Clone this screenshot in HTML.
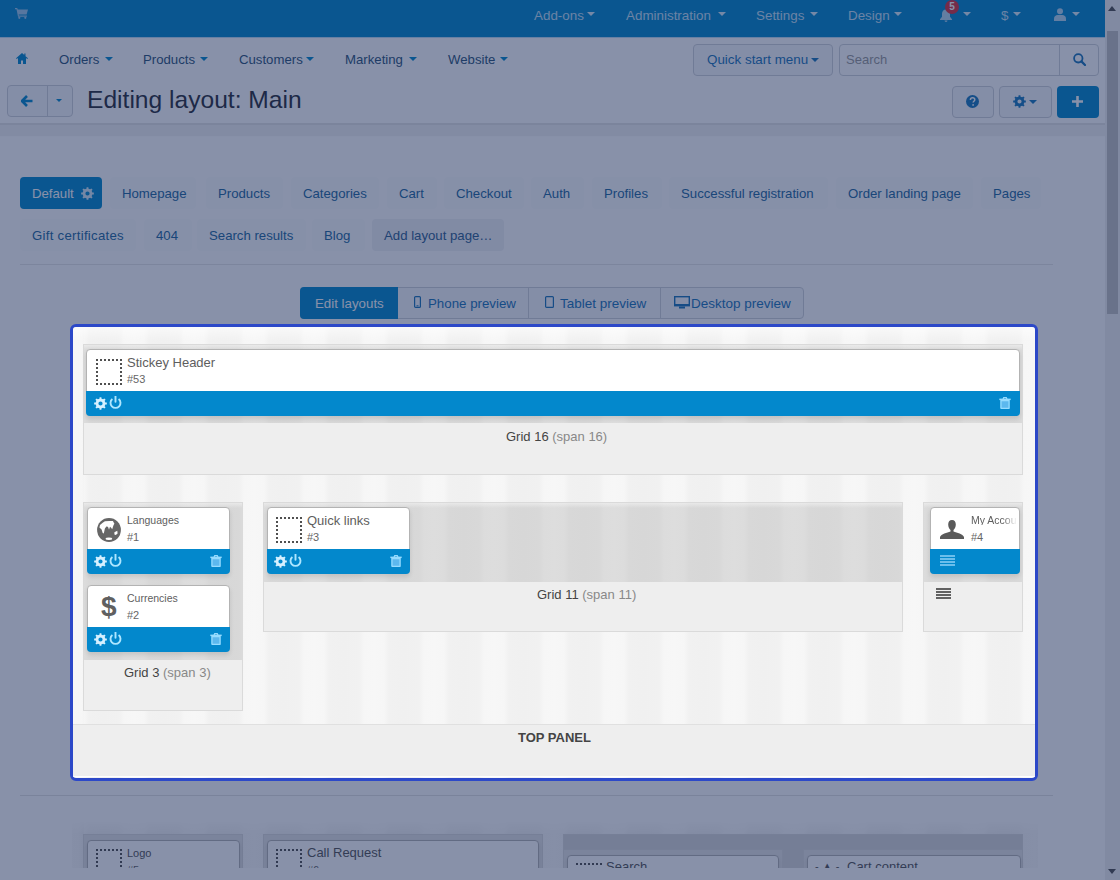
<!DOCTYPE html>
<html><head><meta charset="utf-8">
<style>
*{box-sizing:border-box}
html,body{margin:0;padding:0}
body{width:1120px;height:880px;overflow:hidden;position:relative;background:#fff;font-family:"Liberation Sans",sans-serif}
.a{position:absolute;white-space:nowrap}
svg{position:absolute;display:block}
#topbar{position:absolute;left:0;top:0;width:1105px;height:38px;background:#0388cc;border-bottom:1px solid #bcdcf4}
.tt{position:absolute;top:9px;font-size:13.4px;line-height:13px;color:#c4e2f6}
.caret{position:absolute;width:0;height:0;border-left:4px solid transparent;border-right:4px solid transparent;border-top:4px solid currentColor}
.nav2{position:absolute;top:53px;font-size:13.2px;line-height:13px;color:#2c5478}
.btn{position:absolute;border:1px solid #cfd3d8;border-radius:4px;background:#f7f8fa}
.tab{position:absolute;height:32px;border-radius:4px;font-size:13.2px;line-height:34px;color:#22689e;padding-left:12px}
#overlay{position:absolute;left:0;top:0;width:1120px;height:880px;background:rgba(18,36,84,0.5);z-index:10}
#hl{position:absolute;left:70px;top:324px;width:968px;height:457px;border:3px solid #2c48c8;border-radius:6px;z-index:20;overflow:hidden;
background:repeating-linear-gradient(90deg,#f6f6f6 0,#f1f1f1 5px,#f0f0f0 20px,#f1f1f1 35px,#f6f6f6 40px,#f7f7f7 50px,#f6f6f6 60px);background-position:11px 0;background-color:#f3f3f3}
.grid{position:absolute;background:#eeeeee;border:1px solid #dadada}
.gdark{position:absolute;left:0;top:0;right:0;background:linear-gradient(rgba(240,240,240,0.7),rgba(240,240,240,0) 5px),repeating-linear-gradient(90deg,#dcdcdc 0,#d8d8d8 5px,#d7d7d7 20px,#d8d8d8 35px,#dcdcdc 40px,#dddddd 50px,#dcdcdc 60px);background-position:0 0,0 0}
.blk{position:absolute;background:#fff;border:1px solid #b3b3b3;border-radius:4px;box-shadow:0 3px 4px rgba(0,0,0,0.10)}
.bar{position:absolute;left:-1px;right:-1px;bottom:-1px;height:25px;background:#0388cc;border-radius:0 0 4px 4px}
.bt{position:absolute;color:#5e5e5e;white-space:nowrap}
.glbl{position:absolute;font-size:13px;line-height:13px;color:#444;white-space:nowrap}
.glbl span{color:#888}
</style></head><body>

<!-- TOP BAR -->
<div id="topbar">
  <svg style="left:15px;top:7px" width="13" height="12" viewBox="0 0 13 12"><path d="M0 1h2.2l.6 1.5H13l-1.4 5H3.6l.3 1h8v1.2H3L1.5 2.2H0z" fill="#9cc8ea"/><circle cx="4.3" cy="10.8" r="1.1" fill="#9cc8ea"/><circle cx="10.3" cy="10.8" r="1.1" fill="#9cc8ea"/></svg>
  <div class="tt" style="left:534px">Add-ons</div><div class="caret" style="left:587px;top:12px;color:#d8ecf8"></div>
  <div class="tt" style="left:626px">Administration</div><div class="caret" style="left:718px;top:12px;color:#d8ecf8"></div>
  <div class="tt" style="left:756px">Settings</div><div class="caret" style="left:810px;top:12px;color:#d8ecf8"></div>
  <div class="tt" style="left:848px">Design</div><div class="caret" style="left:894px;top:12px;color:#d8ecf8"></div>
  <svg style="left:939px;top:9px" width="14" height="13" viewBox="0 0 14 13"><path d="M7 0.5c-2.6 0-4 2-4 4.3v3L1 10.3v.7h12v-.7L11 7.8v-3C11 2.5 9.6.5 7 .5zM5.5 11.6a1.5 1.4 0 0 0 3 0z" fill="#b5d8f0"/></svg>
  <div style="position:absolute;left:945px;top:0px;width:14px;height:14px;border-radius:7px;background:#d9323e;color:#fff;font-size:10px;line-height:14px;text-align:center;font-weight:bold">5</div>
  <div class="caret" style="left:963px;top:12px;color:#d8ecf8"></div>
  <div class="tt" style="left:1001px">$</div><div class="caret" style="left:1013px;top:12px;color:#d8ecf8"></div>
  <svg style="left:1054px;top:8px" width="12" height="13" viewBox="0 0 12 13"><circle cx="6" cy="3.3" r="3" fill="#b5d8f0"/><path d="M0 13v-2.5C0 8.2 2 7 3.5 7h5C10 7 12 8.2 12 10.5V13z" fill="#b5d8f0"/></svg>
  <div class="caret" style="left:1072px;top:12px;color:#d8ecf8"></div>
</div>

<!-- SECOND NAV -->
<svg style="left:16px;top:53px" width="12" height="11" viewBox="0 0 12 11"><path d="M6 0L0 5.3l.8.8L2 5v6h3V7.5h2V11h3V5l1.2 1.1.8-.8L9.5 3.2V.6H8.3v1.5z" fill="#0388cc"/></svg>
<div class="nav2" style="left:59px">Orders</div><div class="caret" style="left:105px;top:57px;color:#0388cc"></div>
<div class="nav2" style="left:143px">Products</div><div class="caret" style="left:200px;top:57px;color:#0388cc"></div>
<div class="nav2" style="left:239px">Customers</div><div class="caret" style="left:306px;top:57px;color:#0388cc"></div>
<div class="nav2" style="left:345px">Marketing</div><div class="caret" style="left:409px;top:57px;color:#0388cc"></div>
<div class="nav2" style="left:448px">Website</div><div class="caret" style="left:500px;top:57px;color:#0388cc"></div>

<div class="btn" style="left:693px;top:44px;width:140px;height:32px"></div>
<div class="a" style="left:707px;top:53px;font-size:13.4px;line-height:13px;color:#1a74b8">Quick start menu</div><div class="caret" style="left:811px;top:58px;color:#1a74b8"></div>
<div class="btn" style="left:839px;top:44px;width:260px;height:32px;background:#fff;border-radius:4px"></div>
<div style="position:absolute;left:1059px;top:45px;width:1px;height:30px;background:#cfd3d8"></div>
<div class="a" style="left:846px;top:53px;font-size:13px;line-height:13px;color:#999">Search</div>
<svg style="left:1073px;top:53px" width="13" height="13" viewBox="0 0 13 13"><circle cx="5.3" cy="5.3" r="4.2" fill="none" stroke="#1a74b8" stroke-width="1.8"/><path d="M8.4 8.4l3.6 3.6" stroke="#1a74b8" stroke-width="2.2" stroke-linecap="round"/></svg>

<!-- TITLE ROW -->
<div class="btn" style="left:7px;top:85px;width:66px;height:32px"></div>
<div style="position:absolute;left:47px;top:86px;width:1px;height:30px;background:#cfd3d8"></div>
<svg style="left:21px;top:95px" width="12" height="12" viewBox="0 0 12 12"><path d="M6 1L1 6l5 5M1.5 6H11.5" fill="none" stroke="#0388cc" stroke-width="2.6" stroke-linejoin="round"/></svg>
<div class="caret" style="left:56px;top:99px;color:#0388cc;border-left-width:3.5px;border-right-width:3.5px;border-top-width:3.5px"></div>
<div class="a" style="left:87px;top:86px;font-size:24.6px;line-height:28px;color:#2b2f3a">Editing layout: Main</div>

<div class="btn" style="left:952px;top:86px;width:42px;height:32px"></div>
<svg style="left:966px;top:95px" width="13" height="13" viewBox="0 0 13 13"><circle cx="6.5" cy="6.5" r="6.5" fill="#1878bc"/><path d="M4.4 4.9c0-1.3 1-2.1 2.2-2.1 1.3 0 2.2.8 2.2 1.9 0 1.5-1.7 1.6-1.7 2.9" fill="none" stroke="#fff" stroke-width="1.5"/><circle cx="7.1" cy="9.9" r=".9" fill="#fff"/></svg>
<div class="btn" style="left:999px;top:86px;width:53px;height:32px"></div>
<svg style="left:1013px;top:95px" width="13" height="13" viewBox="0 0 13 13"><path fill-rule="evenodd" fill="#1878bc" d="M11.29 5.45 L12.84 5.62 L12.84 7.38 L11.29 7.55 L10.63 9.14 L11.60 10.36 L10.36 11.60 L9.14 10.63 L7.55 11.29 L7.38 12.84 L5.62 12.84 L5.45 11.29 L3.86 10.63 L2.64 11.60 L1.40 10.36 L2.37 9.14 L1.71 7.55 L0.16 7.38 L0.16 5.62 L1.71 5.45 L2.37 3.86 L1.40 2.64 L2.64 1.40 L3.86 2.37 L5.45 1.71 L5.62 0.16 L7.38 0.16 L7.55 1.71 L9.14 2.37 L10.36 1.40 L11.60 2.64 L10.63 3.86Z M8.60 6.50 A2.1 2.1 0 1 0 4.40 6.50 A2.1 2.1 0 1 0 8.60 6.50Z"/></svg>
<div class="caret" style="left:1029px;top:100px;color:#1878bc"></div>
<div style="position:absolute;left:1057px;top:86px;width:42px;height:32px;border-radius:4px;background:#0388cc"></div>
<svg style="left:1071px;top:95px" width="13" height="13" viewBox="0 0 13 13"><path d="M6.5 1v11M1 6.5h11" stroke="#fff" stroke-width="2.6"/></svg>

<div style="position:absolute;left:0;top:123px;width:1105px;height:14px;background:#f3f3f3;border-top:2px solid #e4e4e4;border-bottom:1px solid #fcfcfc"></div>

<!-- TABS -->
<div class="tab" style="left:20px;top:177px;width:82px;background:#0388cc;color:#fff">Default</div>
<svg style="left:81px;top:187px" width="13" height="13" viewBox="0 0 13 13"><path fill-rule="evenodd" fill="#d6ebf7" d="M11.29 5.45 L12.84 5.62 L12.84 7.38 L11.29 7.55 L10.63 9.14 L11.60 10.36 L10.36 11.60 L9.14 10.63 L7.55 11.29 L7.38 12.84 L5.62 12.84 L5.45 11.29 L3.86 10.63 L2.64 11.60 L1.40 10.36 L2.37 9.14 L1.71 7.55 L0.16 7.38 L0.16 5.62 L1.71 5.45 L2.37 3.86 L1.40 2.64 L2.64 1.40 L3.86 2.37 L5.45 1.71 L5.62 0.16 L7.38 0.16 L7.55 1.71 L9.14 2.37 L10.36 1.40 L11.60 2.64 L10.63 3.86Z M8.60 6.50 A2.1 2.1 0 1 0 4.40 6.50 A2.1 2.1 0 1 0 8.60 6.50Z"/></svg>
<div class="tab" style="left:110px;top:177px;width:86px;background:#fbfcfd">Homepage</div>
<div class="tab" style="left:206px;top:177px;width:77px;background:#fbfcfd">Products</div>
<div class="tab" style="left:291px;top:177px;width:88px;background:#fbfcfd">Categories</div>
<div class="tab" style="left:387px;top:177px;width:50px;background:#fbfcfd">Cart</div>
<div class="tab" style="left:444px;top:177px;width:80px;background:#fbfcfd">Checkout</div>
<div class="tab" style="left:531px;top:177px;width:53px;background:#fbfcfd">Auth</div>
<div class="tab" style="left:592px;top:177px;width:70px;background:#fbfcfd">Profiles</div>
<div class="tab" style="left:669px;top:177px;width:159px;background:#fbfcfd">Successful registration</div>
<div class="tab" style="left:836px;top:177px;width:137px;background:#fbfcfd">Order landing page</div>
<div class="tab" style="left:981px;top:177px;width:60px;background:#fbfcfd">Pages</div>
<div class="tab" style="left:20px;top:219px;width:116px;background:#fbfcfd;letter-spacing:0.28px">Gift certificates</div>
<div class="tab" style="left:144px;top:219px;width:48px;background:#fbfcfd">404</div>
<div class="tab" style="left:197px;top:219px;width:109px;background:#fbfcfd">Search results</div>
<div class="tab" style="left:312px;top:219px;width:53px;background:#fbfcfd">Blog</div>
<div class="tab" style="left:372px;top:219px;width:132px;background:#f1f2f5;color:#2e6090">Add layout page…</div>

<div style="position:absolute;left:20px;top:264px;width:1033px;height:1px;background:#e6e6e6"></div>

<!-- BUTTON GROUP -->
<div style="position:absolute;left:300px;top:287px;width:504px;height:32px;border:1px solid #cfd3d8;border-radius:4px;background:#f7f8fa"></div>
<div style="position:absolute;left:300px;top:287px;width:98px;height:32px;background:#0388cc;border-radius:4px 0 0 4px"></div>
<div style="position:absolute;left:528px;top:288px;width:1px;height:30px;background:#cfd3d8"></div>
<div style="position:absolute;left:660px;top:288px;width:1px;height:30px;background:#cfd3d8"></div>
<div class="a" style="left:315px;top:297px;font-size:13.3px;line-height:13px;color:#fff">Edit layouts</div>
<div class="a" style="left:428px;top:297px;font-size:13.3px;line-height:13px;color:#1a74b8">Phone preview</div>
<div class="a" style="left:560px;top:297px;font-size:13.5px;line-height:13px;color:#1a74b8">Tablet preview</div>
<div class="a" style="left:691px;top:297px;font-size:13.5px;line-height:13px;color:#1a74b8">Desktop preview</div>
<svg style="left:414px;top:296px" width="7" height="12" viewBox="0 0 7 12"><rect x=".6" y=".6" width="5.8" height="10.8" rx="1" fill="none" stroke="#1a74b8" stroke-width="1.2"/><rect x="2.5" y="9.3" width="2" height="1" fill="#1a74b8"/></svg>
<svg style="left:545px;top:296px" width="9" height="12" viewBox="0 0 9 12"><rect x=".6" y=".6" width="7.8" height="10.8" rx="1" fill="none" stroke="#1a74b8" stroke-width="1.2"/></svg>
<svg style="left:674px;top:296px" width="16" height="13" viewBox="0 0 16 13"><rect x=".7" y=".7" width="14.6" height="9" fill="none" stroke="#1a74b8" stroke-width="1.4"/><rect x="1" y="8" width="14" height="2" fill="#1a74b8"/><rect x="5" y="10.5" width="6" height="2" fill="#1a74b8"/></svg>

<!-- BELOW (dimmed) -->
<div style="position:absolute;left:20px;top:795px;width:1033px;height:1px;background:#e2e2e2"></div>
<div style="position:absolute;left:72px;top:820px;width:966px;height:60px;background:repeating-linear-gradient(90deg,#f9f9f9 0,#f4f4f4 5px,#f3f3f3 20px,#f4f4f4 35px,#f9f9f9 40px,#fafafa 50px,#f9f9f9 60px);background-position:12px 0;-webkit-mask-image:linear-gradient(transparent,#000 14px)"></div>
<div class="grid" style="left:83px;top:834px;width:160px;height:60px;background:#e4e4e4"></div>
<div class="blk" style="left:87px;top:840px;width:153px;height:60px"></div>
<div class="a" style="left:127px;top:848px;font-size:11px;line-height:11px;color:#555">Logo</div>
<div class="a" style="left:127px;top:865px;font-size:11px;line-height:11px;color:#666">#5</div>
<div style="position:absolute;left:96px;top:849px;width:26px;height:26px;border:2px dotted #505050"></div>
<div class="grid" style="left:263px;top:834px;width:280px;height:60px;background:#e4e4e4"></div>
<div class="blk" style="left:267px;top:840px;width:272px;height:60px"></div>
<div class="a" style="left:307px;top:846px;font-size:13px;line-height:13px;color:#555">Call Request</div>
<div class="a" style="left:307px;top:865px;font-size:11px;line-height:11px;color:#666">#6</div>
<div style="position:absolute;left:276px;top:849px;width:26px;height:26px;border:2px dotted #505050"></div>
<div class="grid" style="left:563px;top:834px;width:460px;height:60px;background:#d9d9d9"></div>
<div class="grid" style="left:563px;top:849px;width:220px;height:60px;background:#e4e4e4"></div>
<div class="grid" style="left:803px;top:849px;width:220px;height:60px;background:#e4e4e4"></div>
<div class="blk" style="left:567px;top:855px;width:212px;height:60px"></div>
<div style="position:absolute;left:576px;top:863px;width:26px;height:2px;border-top:2px dotted #505050"></div>
<div class="a" style="left:606px;top:860px;font-size:13px;line-height:13px;color:#555">Search</div>
<div class="blk" style="left:807px;top:855px;width:214px;height:60px"></div>
<div class="a" style="left:815px;top:861px;font-size:11px;line-height:11px;color:#555">- &#9650; -</div>
<div class="a" style="left:847px;top:860px;font-size:13px;line-height:13px;color:#555">Cart content</div>
<div style="position:absolute;left:0;top:868px;width:1105px;height:12px;background:#fff"></div>

<!-- SCROLLBAR -->
<div style="position:absolute;left:1105px;top:0;width:15px;height:880px;background:#f1f1f1"></div>
<div style="position:absolute;left:1107px;top:31px;width:11px;height:283px;background:#c1c1c1"></div>
<div class="caret" style="left:1108px;top:6px;border-top:0;border-bottom:5px solid #505050;border-left-width:4.5px;border-right-width:4.5px"></div>
<div class="caret" style="left:1108px;top:869px;border-top:5px solid #505050;border-left-width:4.5px;border-right-width:4.5px"></div>

<div id="overlay"></div>

<!-- HIGHLIGHTED TOP PANEL -->
<div id="hl">
<div id="hlin" style="position:absolute;left:-73px;top:-327px;width:1120px;height:880px"><div style="position:absolute;left:73px;top:327px;width:962px;height:14px;background:linear-gradient(rgba(255,255,255,0.6),rgba(255,255,255,0))"></div><div class="grid" style="left:83px;top:344px;width:940px;height:131px"><div class="gdark" style="height:78px"></div></div><div class="blk" style="left:86px;top:349px;width:934px;height:67px"><div class="bar"></div></div><div style="position:absolute;left:96px;top:359px;width:26px;height:26px;border:2px dotted #505050"></div><div class="bt" style="left:127px;top:356px;font-size:13px;line-height:13px">Stickey Header</div><div class="bt" style="left:127px;top:374px;font-size:11px;line-height:11px;color:#666">#53</div><svg style="left:94px;top:397px" width="13" height="13" viewBox="0 0 13 13"><path fill-rule="evenodd" fill="#d6f0ff" d="M11.29 5.45 L12.84 5.62 L12.84 7.38 L11.29 7.55 L10.63 9.14 L11.60 10.36 L10.36 11.60 L9.14 10.63 L7.55 11.29 L7.38 12.84 L5.62 12.84 L5.45 11.29 L3.86 10.63 L2.64 11.60 L1.40 10.36 L2.37 9.14 L1.71 7.55 L0.16 7.38 L0.16 5.62 L1.71 5.45 L2.37 3.86 L1.40 2.64 L2.64 1.40 L3.86 2.37 L5.45 1.71 L5.62 0.16 L7.38 0.16 L7.55 1.71 L9.14 2.37 L10.36 1.40 L11.60 2.64 L10.63 3.86Z M8.60 6.50 A2.1 2.1 0 1 0 4.40 6.50 A2.1 2.1 0 1 0 8.60 6.50Z"/></svg><svg style="left:109px;top:396px" width="13" height="13" viewBox="0 0 13 13"><path d="M3.4 3.0A5 5 0 1 0 9.6 3.0" fill="none" stroke="#aee6ff" stroke-width="1.9"/><path d="M6.5 0.6v5.2" stroke="#aee6ff" stroke-width="1.9" stroke-linecap="round"/></svg><svg style="left:999px;top:397px" width="12" height="12" viewBox="0 0 12 12"><path d="M4 2.2L4.7 0.7h2.6L8 2.2" fill="none" stroke="#96dcff" stroke-width="1.2"/><rect x="0.3" y="1.6" width="11.4" height="1.5" fill="#96dcff"/><path d="M1.9 3.6h8.2v7.3c0 .4-.3.6-.6.6H2.5c-.3 0-.6-.2-.6-.6z" fill="#5cb8ee" stroke="#96dcff" stroke-width="1.3"/></svg><div class="glbl" style="left:506px;top:430px">Grid 16 <span>(span 16)</span></div><div class="grid" style="left:83px;top:502px;width:160px;height:209px"><div class="gdark" style="height:157px"></div></div><div class="blk" style="left:87px;top:507px;width:143px;height:67px"><div class="bar"></div></div><svg style="left:97px;top:518px" width="24" height="24" viewBox="0 0 24 24"><circle cx="12" cy="12" r="11.9" fill="#666"/><path d="M2.45 9.45L3 6.9L5.7 4.7L7.9 3.3L12.3 2.9L15.9 2.9L17.4 5.8L16.6 6.9L15.9 9.1L15.2 11.3L14.1 9.8L13 8.7L12 11.8L11.2 9.2L10.2 8.6L9.4 8.4L7.9 10.5L6.8 15.6L5.7 14.9L4.6 11.6L3.2 10.2Z M17.4 14.2L20.3 12.7L20.6 15.6L18.8 17.1L17.4 16.4Z" fill="#fff"/><ellipse cx="11.9" cy="20.7" rx="3.3" ry="1.2" fill="#fff"/></svg><div class="bt" style="left:127px;top:515px;font-size:10.5px;line-height:10px">Languages</div><div class="bt" style="left:127px;top:532px;font-size:11px;line-height:11px;color:#666">#1</div><svg style="left:94px;top:555px" width="13" height="13" viewBox="0 0 13 13"><path fill-rule="evenodd" fill="#d6f0ff" d="M11.29 5.45 L12.84 5.62 L12.84 7.38 L11.29 7.55 L10.63 9.14 L11.60 10.36 L10.36 11.60 L9.14 10.63 L7.55 11.29 L7.38 12.84 L5.62 12.84 L5.45 11.29 L3.86 10.63 L2.64 11.60 L1.40 10.36 L2.37 9.14 L1.71 7.55 L0.16 7.38 L0.16 5.62 L1.71 5.45 L2.37 3.86 L1.40 2.64 L2.64 1.40 L3.86 2.37 L5.45 1.71 L5.62 0.16 L7.38 0.16 L7.55 1.71 L9.14 2.37 L10.36 1.40 L11.60 2.64 L10.63 3.86Z M8.60 6.50 A2.1 2.1 0 1 0 4.40 6.50 A2.1 2.1 0 1 0 8.60 6.50Z"/></svg><svg style="left:109px;top:554px" width="13" height="13" viewBox="0 0 13 13"><path d="M3.4 3.0A5 5 0 1 0 9.6 3.0" fill="none" stroke="#aee6ff" stroke-width="1.9"/><path d="M6.5 0.6v5.2" stroke="#aee6ff" stroke-width="1.9" stroke-linecap="round"/></svg><svg style="left:210px;top:555px" width="12" height="12" viewBox="0 0 12 12"><path d="M4 2.2L4.7 0.7h2.6L8 2.2" fill="none" stroke="#96dcff" stroke-width="1.2"/><rect x="0.3" y="1.6" width="11.4" height="1.5" fill="#96dcff"/><path d="M1.9 3.6h8.2v7.3c0 .4-.3.6-.6.6H2.5c-.3 0-.6-.2-.6-.6z" fill="#5cb8ee" stroke="#96dcff" stroke-width="1.3"/></svg><div class="blk" style="left:87px;top:585px;width:143px;height:67px"><div class="bar"></div></div><div class="a" style="left:101px;top:592px;font-size:28px;line-height:30px;font-weight:bold;color:#606060">$</div><div class="bt" style="left:127px;top:593px;font-size:10.5px;line-height:10px">Currencies</div><div class="bt" style="left:127px;top:610px;font-size:11px;line-height:11px;color:#666">#2</div><svg style="left:94px;top:633px" width="13" height="13" viewBox="0 0 13 13"><path fill-rule="evenodd" fill="#d6f0ff" d="M11.29 5.45 L12.84 5.62 L12.84 7.38 L11.29 7.55 L10.63 9.14 L11.60 10.36 L10.36 11.60 L9.14 10.63 L7.55 11.29 L7.38 12.84 L5.62 12.84 L5.45 11.29 L3.86 10.63 L2.64 11.60 L1.40 10.36 L2.37 9.14 L1.71 7.55 L0.16 7.38 L0.16 5.62 L1.71 5.45 L2.37 3.86 L1.40 2.64 L2.64 1.40 L3.86 2.37 L5.45 1.71 L5.62 0.16 L7.38 0.16 L7.55 1.71 L9.14 2.37 L10.36 1.40 L11.60 2.64 L10.63 3.86Z M8.60 6.50 A2.1 2.1 0 1 0 4.40 6.50 A2.1 2.1 0 1 0 8.60 6.50Z"/></svg><svg style="left:109px;top:632px" width="13" height="13" viewBox="0 0 13 13"><path d="M3.4 3.0A5 5 0 1 0 9.6 3.0" fill="none" stroke="#aee6ff" stroke-width="1.9"/><path d="M6.5 0.6v5.2" stroke="#aee6ff" stroke-width="1.9" stroke-linecap="round"/></svg><svg style="left:210px;top:633px" width="12" height="12" viewBox="0 0 12 12"><path d="M4 2.2L4.7 0.7h2.6L8 2.2" fill="none" stroke="#96dcff" stroke-width="1.2"/><rect x="0.3" y="1.6" width="11.4" height="1.5" fill="#96dcff"/><path d="M1.9 3.6h8.2v7.3c0 .4-.3.6-.6.6H2.5c-.3 0-.6-.2-.6-.6z" fill="#5cb8ee" stroke="#96dcff" stroke-width="1.3"/></svg><div class="glbl" style="left:124px;top:666px">Grid 3 <span>(span 3)</span></div><div class="grid" style="left:263px;top:502px;width:640px;height:130px"><div class="gdark" style="height:79px"></div></div><div class="blk" style="left:267px;top:507px;width:143px;height:67px"><div class="bar"></div></div><div style="position:absolute;left:276px;top:517px;width:26px;height:26px;border:2px dotted #505050"></div><div class="bt" style="left:307px;top:514px;font-size:13px;line-height:13px">Quick links</div><div class="bt" style="left:307px;top:532px;font-size:11px;line-height:11px;color:#666">#3</div><svg style="left:274px;top:555px" width="13" height="13" viewBox="0 0 13 13"><path fill-rule="evenodd" fill="#d6f0ff" d="M11.29 5.45 L12.84 5.62 L12.84 7.38 L11.29 7.55 L10.63 9.14 L11.60 10.36 L10.36 11.60 L9.14 10.63 L7.55 11.29 L7.38 12.84 L5.62 12.84 L5.45 11.29 L3.86 10.63 L2.64 11.60 L1.40 10.36 L2.37 9.14 L1.71 7.55 L0.16 7.38 L0.16 5.62 L1.71 5.45 L2.37 3.86 L1.40 2.64 L2.64 1.40 L3.86 2.37 L5.45 1.71 L5.62 0.16 L7.38 0.16 L7.55 1.71 L9.14 2.37 L10.36 1.40 L11.60 2.64 L10.63 3.86Z M8.60 6.50 A2.1 2.1 0 1 0 4.40 6.50 A2.1 2.1 0 1 0 8.60 6.50Z"/></svg><svg style="left:289px;top:554px" width="13" height="13" viewBox="0 0 13 13"><path d="M3.4 3.0A5 5 0 1 0 9.6 3.0" fill="none" stroke="#aee6ff" stroke-width="1.9"/><path d="M6.5 0.6v5.2" stroke="#aee6ff" stroke-width="1.9" stroke-linecap="round"/></svg><svg style="left:390px;top:555px" width="12" height="12" viewBox="0 0 12 12"><path d="M4 2.2L4.7 0.7h2.6L8 2.2" fill="none" stroke="#96dcff" stroke-width="1.2"/><rect x="0.3" y="1.6" width="11.4" height="1.5" fill="#96dcff"/><path d="M1.9 3.6h8.2v7.3c0 .4-.3.6-.6.6H2.5c-.3 0-.6-.2-.6-.6z" fill="#5cb8ee" stroke="#96dcff" stroke-width="1.3"/></svg><div class="glbl" style="left:537px;top:588px">Grid 11 <span>(span 11)</span></div><div class="grid" style="left:923px;top:502px;width:100px;height:130px"><div class="gdark" style="height:79px"></div></div><div class="blk" style="left:930px;top:507px;width:90px;height:67px"><div class="bar"></div></div><svg style="left:940px;top:520px" width="24" height="19" viewBox="0 0 24 19"><path d="M12 0c2.6 0 3.8 2 3.8 4.6 0 2.2-1 4.5-2.3 5.5v1.4c3.5 1.3 9.3 2.5 10.5 5.5V19H0v-2c1.2-3 7-4.2 10.5-5.5v-1.4C9.2 9.1 8.2 6.8 8.2 4.6 8.2 2 9.4 0 12 0z" fill="#5a5a5a"/></svg><div class="bt" style="left:971px;top:515px;font-size:10.5px;line-height:10px;width:46px;overflow:hidden;-webkit-mask-image:linear-gradient(90deg,#000 70%,transparent)">My Account</div><div class="bt" style="left:971px;top:532px;font-size:11px;line-height:11px;color:#666">#4</div><svg style="left:940px;top:555px" width="15" height="11" viewBox="0 0 15 11"><path d="M0 1h15M0 4h15M0 7h15M0 10h15" stroke="#8fd0f6" stroke-width="1.4"/></svg><svg style="left:936px;top:588px" width="15" height="11" viewBox="0 0 15 11"><path d="M0 1h15M0 4h15M0 7h15M0 10h15" stroke="#333" stroke-width="1.5"/></svg><div style="position:absolute;left:73px;top:724px;width:962px;height:53px;background:#eeeeee;border-top:1px solid #e0e0e0;border-bottom:1px solid #fff"></div><div class="a" style="left:518px;top:731px;font-size:13px;line-height:13px;font-weight:bold;color:#444">TOP PANEL</div></div>
</div>
</body></html>
